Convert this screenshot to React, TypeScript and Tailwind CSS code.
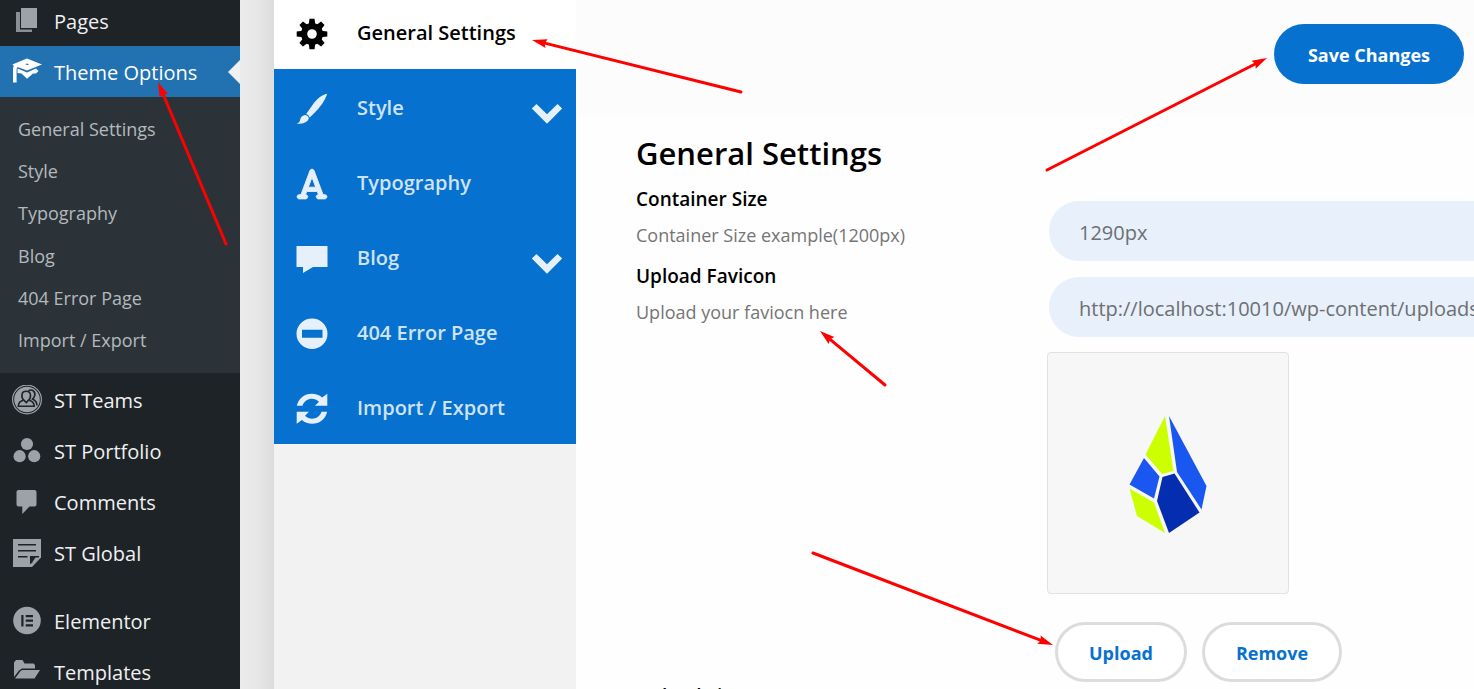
import React from "react";
import { FaFont } from "react-icons/fa6";

type IconProps = { className?: string };

const PagesIcon = ({ className }: IconProps) => (
  <svg viewBox="0 0 30 30" className={className} fill="currentColor" aria-hidden="true">
    <path d="M9 2h16v20H9z" />
    <path d="M4 6h4v17.500h12v2.500H4z" opacity=".85" />
  </svg>
);
const CapIcon = ({ className }: IconProps) => (
  <svg viewBox="0 0 30 30" className={className} fill="currentColor" aria-hidden="true">
    <path fillRule="evenodd" d="M15 1.500L30 7.500L15 13.500L5.500 10L4.600 12V25.500H1V10.500L2 9L.3 7.500zM13 7.200L15.500 8L17 7.200L15 6.600z" />
    <path d="M5.500 11.500L15 15.500L24 11.500L26.500 14L24 16.500L21 16.500L15 21.800L9.500 16.500L5.500 16z" />
  </svg>
);
const TeamsIcon = ({ className }: IconProps) => (
  <svg viewBox="0 0 30 30" className={className} aria-hidden="true">
    <circle cx="15" cy="14.500" r="14.400" fill="none" stroke="currentColor" strokeWidth="1.200" />
    <circle cx="15" cy="14.500" r="12.800" fill="currentColor" />
    <g fill="none" stroke="#1d2327" strokeWidth="1.600">
      <path d="M16.500 5.800c4-2.300 7.500 1.500 6 5.500q-.6 1.600-2 2.800c2.600 1.200 4.300 3 4.500 6.400" />
      <path d="M14.200 6.300c-5.600 0-5.200 6.700-1.900 9.300l2 2l1.800-2c3.300-2.600 3.700-9.300-1.900-9.300z" />
      <path d="M11.300 15.300c-3 .8-4.800 2.300-5 5.900h15.900c-.2-3.600-2-5.100-5-5.900" />
    </g>
  </svg>
);
const PortfolioIcon = ({ className }: IconProps) => (
  <svg viewBox="0 0 30 30" className={className} fill="currentColor" aria-hidden="true">
    <circle cx="15" cy="8" r="6.100" />
    <circle cx="7.600" cy="20.200" r="6.100" />
    <circle cx="22.200" cy="20.200" r="6.100" />
  </svg>
);
const CommentsIcon = ({ className }: IconProps) => (
  <svg viewBox="0 0 30 30" className={className} fill="currentColor" aria-hidden="true">
    <path d="M6.500 3h16q2 0 2 2v12.500q0 2-2 2H17.500L10.300 27V19.500H6.500q-2 0-2-2V5q0-2 2-2z" />
  </svg>
);
const NoteIcon = ({ className }: IconProps) => (
  <svg viewBox="0 0 30 30" className={className} aria-hidden="true">
    <path d="M1 1h28v18.500L20 29H1z" fill="currentColor" />
    <g fill="#1d2327">
      <path d="M6 6h18v1.500H6zM6 12h18v1.500H6zM6 18h9.500v1.500H6zM18 18h9v1.500L18.500 26H18z" />
    </g>
    <path d="M23.500 19.500h4L20.800 26v-2.500z" fill="currentColor" />
  </svg>
);
const ElementorIcon = ({ className }: IconProps) => (
  <svg viewBox="0 0 30 30" className={className} aria-hidden="true">
    <circle cx="15" cy="14.500" r="13.800" fill="currentColor" />
    <path d="M9.300 9h2.200v11.500H9.300zM13.700 9H21v2.200h-7.300zM13.700 13.600H21v2.200h-7.300zM13.700 18.300H21v2.200h-7.300z" fill="#1d2327" />
  </svg>
);
const FolderIcon = ({ className }: IconProps) => (
  <svg viewBox="0 0 30 30" className={className} fill="currentColor" aria-hidden="true">
    <path d="M2 20V5.500L4 3h6.500l2 3.500h9L23 8v3.500H10L7 13.500z" />
    <path d="M10.500 13H28L22.500 21.500H3L8.500 14z" />
  </svg>
);

const GearIcon = ({ className }: IconProps) => (
  <svg viewBox="0 0 32 32" className={className} fill="currentColor" aria-hidden="true">
    <path fillRule="evenodd" d="M16 5a11 11 0 1 0 0 22a11 11 0 1 0 0-22zM16 11.200a4.800 4.800 0 1 1 0 9.600a4.800 4.800 0 1 1 0-9.600z" />
    {[0, 45, 90, 135, 180, 225, 270, 315].map((angle) => (
      <path key={angle} d="M13.500 .7h5L19.300 7h-6.600z" transform={`rotate(${angle} 16 16)`} />
    ))}
  </svg>
);
const BrushIcon = ({ className }: IconProps) => (
  <svg viewBox="0 0 32 32" className={className} fill="currentColor" aria-hidden="true">
    <path d="M31.300.7C26 1.500 21 6 17 11.200L10.200 21q2.600.8 3.600 3.400C20 19 26 12 29 6z" />
    <path d="M9.300 22c2 .2 3.500 1.700 3.500 3.500C11.500 29.500 7 31 .5 30.800c2.500-.9 3.200-2 3.700-4.300.6-2.800 2.500-4.300 5.100-4.500z" />
  </svg>
);
const TypeIcon = ({ className }: IconProps) => (
  <span className={className}>
    <FaFont className="-m-px size-[34px]" stroke="currentColor" strokeWidth="14" aria-hidden="true" />
  </span>
);
const BubbleIcon = ({ className }: IconProps) => (
  <svg viewBox="0 0 32 32" className={className} fill="currentColor" aria-hidden="true">
    <path d="M.5 3h31v21H17L7 30V24H.5z" />
  </svg>
);
const MinusIcon = ({ className }: IconProps) => (
  <svg viewBox="0 0 32 32" className={className} fill="currentColor" aria-hidden="true">
    <path fillRule="evenodd" d="M16 .5a15.500 15.200 0 1 0 0 30.400a15.500 15.200 0 1 0 0-30.400zM6 11.800h20.500v8H6z" />
  </svg>
);
const RefreshIcon = ({ className }: IconProps) => (
  <svg viewBox="0 0 32 32" className={className} fill="currentColor" aria-hidden="true">
    <path d="M.8 12.800C2.500 5.500 8.500.8 15.800.8c4 0 7.500 1.200 10.300 3.800L31.300.8v12H19l4-4c-5-5-14-3.700-16.500 4z" />
    <path d="M31.200 18.800C29.500 26.100 23.500 30.800 16.200 30.800c-4 0-7.500-1.200-10.300-3.800L.7 30.800v-12H13l-4 4c5 5 14 3.700 16.500-4z" />
  </svg>
);
const ChevronIcon = ({ className }: IconProps) => (
  <svg viewBox="0 0 32 22" className={className} fill="currentColor" aria-hidden="true">
    <path d="M5.500 1L16 11.300L26.500 1L31.200 5.600L16 20.700L.8 5.600z" />
  </svg>
);

const FaviconLogo = ({ className }: IconProps) => (
  <svg viewBox="0 0 80 120" className={className} aria-label="Favicon preview" role="img">
    <path d="M37 3L45.500 58L34 61L17.500 41.500z" fill="#ccff00" />
    <path d="M41 3L78.500 73L73.500 96.500L49 59z" fill="#1a56f0" />
    <path d="M16 45L31.500 63.500L26 85.500L1.500 71.500z" fill="#1a56f0" />
    <path d="M34.500 64L46.500 60.500L71.500 99.500L41 120L29 88z" fill="#052db0" />
    <path d="M1.500 75.500L26 89.500L37 120L9 103z" fill="#ccff00" />
  </svg>
);

const submenu = ["General Settings", "Style", "Typography", "Blog", "404 Error Page", "Import / Export"];

const mainMenu = [
  { label: "ST Teams", Icon: TeamsIcon },
  { label: "ST Portfolio", Icon: PortfolioIcon },
  { label: "Comments", Icon: CommentsIcon },
  { label: "ST Global", Icon: NoteIcon },
];
const pluginMenu = [
  { label: "Elementor", Icon: ElementorIcon },
  { label: "Templates", Icon: FolderIcon },
];

const tabs = [
  { label: "Style", Icon: BrushIcon, expandable: true },
  { label: "Typography", Icon: TypeIcon, expandable: false },
  { label: "Blog", Icon: BubbleIcon, expandable: true },
  { label: "404 Error Page", Icon: MinusIcon, expandable: false },
  { label: "Import / Export", Icon: RefreshIcon, expandable: false },
];

const arrows = [
  [226, 244, 158, 82],
  [741, 92, 532, 40],
  [1047, 170, 1267, 58],
  [885, 385, 820, 331],
  [813, 553, 1053, 645],
];

function MenuLink({ label, Icon }: { label: string; Icon: React.FC<IconProps> }) {
  return (
    <a href="#" className="flex h-[51px] items-center gap-3 pl-3 text-[20px] text-[#f0f0f1]">
      <Icon className="size-[30px] shrink-0 text-[#9ca2a7]" />
      <span className="pt-0.5">{label}</span>
    </a>
  );
}

function Arrows() {
  return (
    <svg className="pointer-events-none absolute top-0 left-0" width="1474" height="689" aria-hidden="true">
      {arrows.map(([x1, y1, x2, y2]) => {
        const length = Math.hypot(x2 - x1, y2 - y1);
        const angle = (Math.atan2(y2 - y1, x2 - x1) * 180) / Math.PI;
        return (
          <g key={x1} transform={`translate(${x1} ${y1}) rotate(${angle})`}>
            <line x1="0" y1="0" x2={length - 10} y2="0" stroke="#f00" strokeWidth="3" strokeLinecap="round" />
            <path d={`M${length} 0l-15 -4.500l2 4.500l-2 4.500z`} fill="#f00" />
          </g>
        );
      })}
    </svg>
  );
}

export default function App() {
  return (
    <div className="relative flex h-screen overflow-hidden bg-[#fefefe] font-['Open_Sans','Noto_Sans',sans-serif]">
      <nav className="w-60 shrink-0 bg-[#1d2327]" aria-label="Admin menu">
        <a href="#" className="flex h-[46px] items-center gap-3 pb-1 pl-3 text-[20px] text-[#f0f0f1]">
          <PagesIcon className="size-[30px] shrink-0 text-[#9ca2a7]" />
          <span className="pt-0.5">Pages</span>
        </a>
        <a href="#" className="relative flex h-[51px] items-center gap-3 bg-[#2271b1] pl-3 text-[20px] text-white">
          <CapIcon className="size-[30px] shrink-0" />
          <span className="pt-0.5">Theme Options</span>
          <svg viewBox="0 0 12 24" className="absolute top-[14px] right-0 h-6 w-3" fill="#f0f0f1" aria-hidden="true">
            <path d="M12 0v24L0 12z" />
          </svg>
        </a>
        <div className="flex h-[276px] flex-col bg-[#2c3338] py-[11px]">
          {submenu.map((item) => (
            <a key={item} href="#" className="flex flex-1 items-center pl-[18px] text-[18px] text-[#b4b9be]">
              {item}
            </a>
          ))}
        </div>
        <div className="flex flex-col gap-[17px] pt-px">
          <div>
            {mainMenu.map((item) => (
              <MenuLink key={item.label} {...item} />
            ))}
          </div>
          <div>
            {pluginMenu.map((item) => (
              <MenuLink key={item.label} {...item} />
            ))}
          </div>
        </div>
      </nav>

      <div className="w-[34px] shrink-0 bg-linear-to-r from-[#ececec] via-[#e7e7e7] to-[#dcdcdd]" />

      <nav className="w-[302px] shrink-0 bg-[#f2f2f2]" aria-label="Option sections">
        <a href="#" className="flex h-[69px] items-center gap-[29px] bg-white pb-0.5 pl-[22px] text-[20px] font-semibold text-black">
          <GearIcon className="size-8 shrink-0" />
          <span className="pb-px">General Settings</span>
        </a>
        <div className="bg-[#0771cf]">
          {tabs.map(({ label, Icon, expandable }) => (
            <a key={label} href="#" className="flex h-[75px] items-center gap-[29px] pt-1 pl-[22px] text-[20px] font-semibold text-[#cfe3f5]">
              <Icon className="size-8 shrink-0 text-[#e6f0fa]" />
              <span className="pb-0.5">{label}</span>
              {expandable && <ChevronIcon className="mt-[10px] mr-[13px] ml-auto h-[22px] w-8 text-[#e6f0fa]" />}
            </a>
          ))}
        </div>
      </nav>

      <main className="min-w-0 flex-1">
        <header className="flex h-[115px] items-start justify-end bg-[#fcfcfc] pt-6 pr-[10px]">
          <button type="button" className="h-[60px] rounded-full bg-[#0771cf] px-[34px] pt-0.5 text-[18px] font-bold text-white">
            Save Changes
          </button>
        </header>
        <form className="pl-[60px]" onSubmit={(event) => event.preventDefault()}>
          <h1 className="h-[70px] pt-[13px] text-[31px] leading-[50px] font-semibold text-black">General Settings</h1>

          <div className="flex h-[77px]">
            <div className="w-[413px] shrink-0">
              <label htmlFor="container-size" className="block text-[19px] leading-7 font-semibold text-black">
                Container Size
              </label>
              <p className="mt-2 text-[18px] leading-7 text-[#757575]">Container Size example(1200px)</p>
            </div>
            <div className="-mr-8 flex-1 pt-4">
              <input
                id="container-size"
                defaultValue="1290px"
                className="h-[60px] w-full rounded-full bg-[#e8f0fb] px-[30px] pt-0.5 text-[20px] text-[#6d6f72] outline-none"
              />
            </div>
          </div>

          <div className="flex">
            <div className="w-[413px] shrink-0">
              <label htmlFor="favicon" className="block text-[19px] leading-7 font-semibold text-black">
                Upload Favicon
              </label>
              <p className="mt-2 text-[18px] leading-7 text-[#757575]">Upload your faviocn here</p>
            </div>
            <div className="-mr-8 flex-1 pt-[15px]">
              <input
                id="favicon"
                defaultValue="http://localhost:10010/wp-content/uploads/2023/favicon.png"
                className="h-[60px] w-full rounded-full bg-[#e8f0fb] px-[30px] pt-0.5 text-[20px] text-[#6d6f72] outline-none"
              />
              <div className="mt-[15px] -ml-0.5 flex size-[242px] items-center justify-center rounded border border-[#e2e2e2] bg-[#f7f7f7]">
                <FaviconLogo className="h-[120px] w-20" />
              </div>
              <div className="mt-7 ml-1.5 flex gap-[15px] text-[18px] font-bold text-[#0771cf]">
                <button type="button" className="h-[60px] rounded-full border-3 border-[#dcdcdc] bg-white px-[31px] pt-0.5">
                  Upload
                </button>
                <button type="button" className="h-[60px] rounded-full border-3 border-[#dcdcdc] bg-white px-[31px] pt-0.5">
                  Remove
                </button>
              </div>
            </div>
          </div>

          <h2 className="text-[19px] leading-7 font-semibold text-black">Upload Site Logo</h2>
        </form>
      </main>
      <Arrows />
    </div>
  );
}
